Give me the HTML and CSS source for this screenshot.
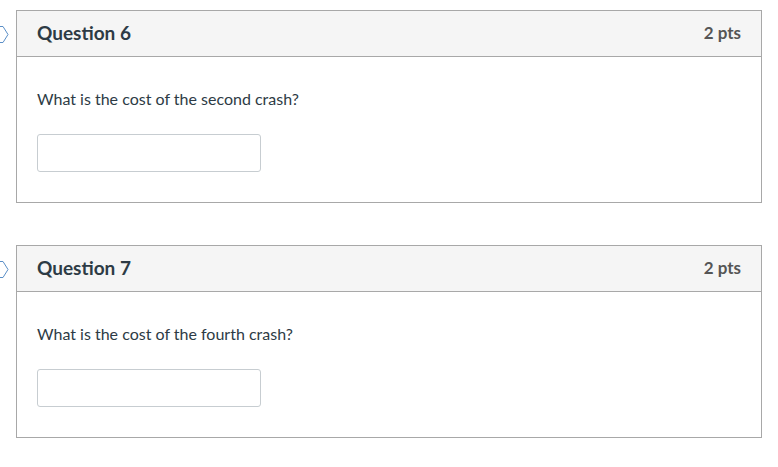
FILE: index.html
```html
<!DOCTYPE html>
<html>
<head>
<meta charset="utf-8">
<link rel="stylesheet" href="styles.css">
</head>
<body>
<div class="quiz">
  <div class="question">
    <svg class="marker" width="10" height="20" viewBox="0 0 10 20"><path d="M-10 1.5 H3 L8 9.5 L3 17.5 H-10" fill="none" stroke="#5b8fc7" stroke-width="1"/></svg>
    <div class="q-header">
      <span class="q-title">Question 6</span>
      <span class="q-pts">2 pts</span>
    </div>
    <div class="q-body">
      <p class="q-text">What is the cost of the second crash?</p>
      <input class="q-input" type="text">
    </div>
  </div>
  <div class="question">
    <svg class="marker" width="10" height="20" viewBox="0 0 10 20"><path d="M-10 1.5 H3 L8 9.5 L3 17.5 H-10" fill="none" stroke="#5b8fc7" stroke-width="1"/></svg>
    <div class="q-header">
      <span class="q-title">Question 7</span>
      <span class="q-pts">2 pts</span>
    </div>
    <div class="q-body">
      <p class="q-text">What is the cost of the fourth crash?</p>
      <input class="q-input" type="text">
    </div>
  </div>
</div>
</body>
</html>
```
FILE: styles.css
```css
html, body {
  margin: 0;
  padding: 0;
  background: #fff;
  font-family: Lato, "Liberation Sans", sans-serif;
  color: #2d3b45;
}
.quiz {
  padding: 10px 16px 0 16px;
  display: flex;
  flex-direction: column;
  gap: 42px;
}
.question {
  position: relative;
  border: 1px solid #a8a8a8;
  box-sizing: border-box;
  height: 193px;
}
.marker {
  position: absolute;
  left: -17px;
  top: 14px;
}
.q-header {
  height: 46px;
  box-sizing: border-box;
  background: #f5f5f5;
  border-bottom: 1px solid #a8a8a8;
  display: flex;
  align-items: center;
  justify-content: space-between;
  padding: 0 20px 2px 20px;
}
.q-title {
  font-size: 19px;
  font-weight: 700;
  color: #2d3b45;
}
.q-pts {
  font-size: 17px;
  font-weight: 700;
  color: #555;
}
.q-body {
  padding: 32px 20px 0 20px;
}
.q-text {
  margin: 0;
  font-size: 16px;
  line-height: 20px;
}
.q-input {
  display: block;
  margin-top: 25px;
  width: 224px;
  height: 38px;
  box-sizing: border-box;
  border: 1px solid #c7cdd1;
  border-radius: 3px;
  background: #fff;
  padding: 0 8px;
}
```
